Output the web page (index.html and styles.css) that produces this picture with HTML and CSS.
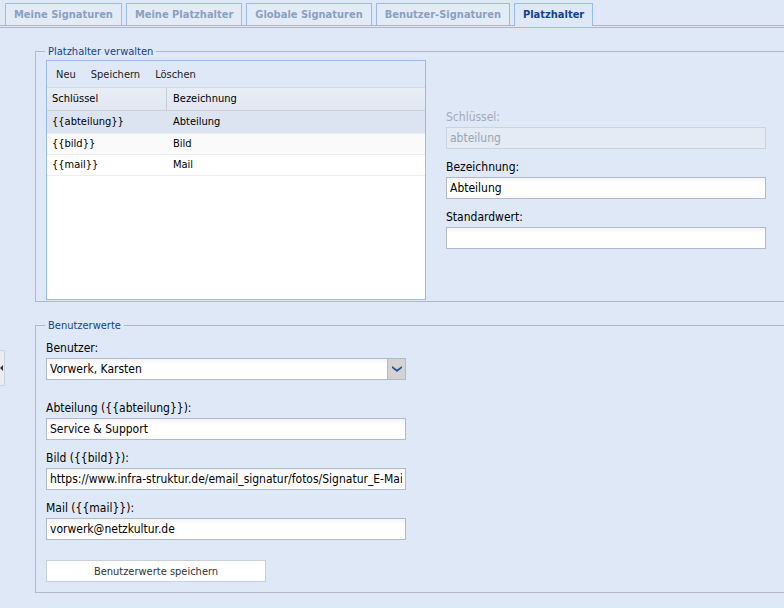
FILE: index.html
```html
<!DOCTYPE html>
<html lang="de">
<head>
  <meta charset="UTF-8" />
  <title>Platzhalter</title>
  <link rel="stylesheet" href="styles.css">
</head>
<body>
  <!-- Reiter -->
  <div class="tabs">
    <div class="tab">Meine Signaturen</div>
    <div class="tab">Meine Platzhalter</div>
    <div class="tab">Globale Signaturen</div>
    <div class="tab">Benutzer-Signaturen</div>
    <div class="tab active">Platzhalter</div>
  </div>
  <div class="tab-spacer"></div>

  <div class="panel">
    <span class="collapse-handle"></span>

    <!-- Platzhalter verwalten -->
    <fieldset class="group">
      <legend>Platzhalter verwalten</legend>
      <div class="group-row">
        <div class="grid">
          <div class="toolbar">
            <span class="tb-btn">Neu</span>
            <span class="tb-btn">Speichern</span>
            <span class="tb-btn">Löschen</span>
          </div>
          <div class="grid-head">
            <div class="col key">Schlüssel</div>
            <div class="col name">Bezeichnung</div>
          </div>
          <div class="grid-row selected">
            <div class="col key">{{abteilung}}</div>
            <div class="col name">Abteilung</div>
          </div>
          <div class="grid-row alt">
            <div class="col key">{{bild}}</div>
            <div class="col name">Bild</div>
          </div>
          <div class="grid-row">
            <div class="col key">{{mail}}</div>
            <div class="col name">Mail</div>
          </div>
        </div>

        <div class="side-form">
          <div class="field disabled">
            <label>Schlüssel:</label>
            <input type="text" value="abteilung" disabled>
          </div>
          <div class="field">
            <label>Bezeichnung:</label>
            <input type="text" value="Abteilung">
          </div>
          <div class="field">
            <label>Standardwert:</label>
            <input type="text" value="">
          </div>
        </div>
      </div>
    </fieldset>

    <!-- Benutzerwerte -->
    <fieldset class="group users">
      <legend>Benutzerwerte</legend>
      <div class="field wide">
        <label>Benutzer:</label>
        <div class="combo">
          <input type="text" value="Vorwerk, Karsten">
          <span class="trigger">
            <svg width="10" height="6" viewBox="0 0 10 6"><path d="M0 0 L5 3.5 L10 0 L10 2 L5 6 L0 2 Z" fill="#2d5191"/></svg>
          </span>
        </div>
      </div>
      <div class="field">
        <label>Abteilung ({{abteilung}}):</label>
        <input type="text" value="Service &amp; Support">
      </div>
      <div class="field">
        <label>Bild ({{bild}}):</label>
        <input type="text" value="https://www.infra-struktur.de/email_signatur/fotos/Signatur_E-Mail.jpg">
      </div>
      <div class="field">
        <label>Mail ({{mail}}):</label>
        <input type="text" value="vorwerk@netzkultur.de">
      </div>
      <button class="save-btn">Benutzerwerte speichern</button>
    </fieldset>
  </div>
</body>
</html>
```

FILE: styles.css
```css
:root {
  --bg: #dfe8f6;
  --blue-border: #99bbe8;
  --gray-border: #b5b8c8;
  --title: #15428b;
}

body {
  margin: 0;
  background: var(--bg);
  font-family: "DejaVu Sans Condensed", "DejaVu Sans", sans-serif;
  font-size: 12px;
  color: #000;
  overflow: hidden;
}

/* Reiter */
.tabs {
  display: flex;
  gap: 4px;
  padding: 3px 0 0 5px;
  border-bottom: 1px solid var(--blue-border);
}

.tab {
  height: 21px;
  line-height: 22px;
  padding: 0 8px;
  border: 1px solid var(--blue-border);
  border-bottom: none;
  background: #e3ebf7;
  color: #8ba0bf;
  font-size: 11px;
  font-weight: bold;
}

.tab.active {
  color: var(--title);
  background: var(--bg);
  margin-bottom: -1px;
  height: 22px;
}

.tab-spacer {
  height: 1px;
  border-bottom: 1px solid var(--blue-border);
}

.panel {
  position: relative;
  padding: 17px 0 0 35px;
}

.collapse-handle {
  position: absolute;
  left: 0;
  top: 322px;
  width: 4px;
  height: 34px;
  background: #e9ecf1;
  border: 1px solid #cdd3dc;
  border-left: none;
  border-radius: 0 2px 2px 0;
}

.collapse-handle::after {
  content: "";
  position: absolute;
  left: 0;
  top: 14px;
  border-top: 3px solid transparent;
  border-bottom: 3px solid transparent;
  border-right: 3px solid #333;
}

/* Fieldsets */
.group {
  margin: 0 -20px 0 0;
  padding: 2px 0 1px 10px;
  border: 1px solid var(--gray-border);
  border-right: none;
}

.group legend {
  margin-left: -1px;
  padding: 0 3px;
  font-size: 11px;
  line-height: 13px;
  color: var(--title);
}

.group.users {
  margin-top: 17px;
  padding: 8px 0 10px 10px;
}

.group-row {
  display: flex;
  align-items: flex-start;
}

/* Tabelle */
.grid {
  width: 378px;
  height: 238px;
  border: 1px solid var(--blue-border);
  background: #fff;
  font-size: 11px;
}

.toolbar {
  display: flex;
  height: 26px;
  align-items: center;
  padding-left: 3px;
  gap: 3px;
  background: var(--bg);
  border-bottom: 1px solid #d0d8e4;
}

.tb-btn {
  padding: 0 6px;
  color: #222;
}

.grid-head,
.grid-row {
  display: flex;
}

.grid-head {
  height: 22px;
  line-height: 22px;
  background: linear-gradient(#e8edf5, #e0e7f2);
  border-bottom: 1px solid #d0d0d0;
}

.grid-head .col.key {
  border-right: 1px solid #c8ccd4;
}

.col.key {
  width: 114px;
  padding-left: 5px;
}

.col.name {
  padding-left: 6px;
}

.grid-row {
  height: 20px;
  line-height: 20px;
  border-bottom: 1px solid #ededed;
}

.grid-row .col.key {
  width: 115px;
}

.grid-row.alt {
  background: #fafafa;
}

.grid-row.selected {
  background: #dce4f1;
  height: 22px;
  line-height: 22px;
}

/* Formulare */
.side-form {
  margin-left: 20px;
  padding-top: 49px;
  width: 320px;
}

.field {
  margin-bottom: 10px;
  width: 360px;
}

.side-form .field {
  width: 320px;
}

.field.wide {
  margin-bottom: 20px;
}

.field label {
  display: block;
  line-height: 16px;
  margin-bottom: 2px;
}

.field input {
  display: block;
  box-sizing: border-box;
  width: 100%;
  height: 22px;
  margin: 0;
  padding: 0 3px;
  border: 1px solid var(--gray-border);
  background: linear-gradient(#f4f4f4, #fff 5px);
  font: inherit;
  color: #000;
  outline: none;
}

.field.disabled label {
  color: #a3abb8;
}

.field.disabled input {
  background: #e4ebf5;
  border-color: #cbd3df;
  color: #9aa3b1;
}

.combo {
  display: flex;
}

.combo input {
  flex: 1;
  border-right: none;
}

.trigger {
  width: 17px;
  height: 20px;
  display: flex;
  align-items: center;
  justify-content: center;
  background: #d3d3d3;
  border: 1px solid var(--gray-border);
}

.save-btn {
  display: block;
  width: 220px;
  height: 22px;
  margin-top: 20px;
  border: 1px solid #c9d0da;
  background: #fff;
  font-family: inherit;
  font-size: 11px;
  color: #333;
}
```
